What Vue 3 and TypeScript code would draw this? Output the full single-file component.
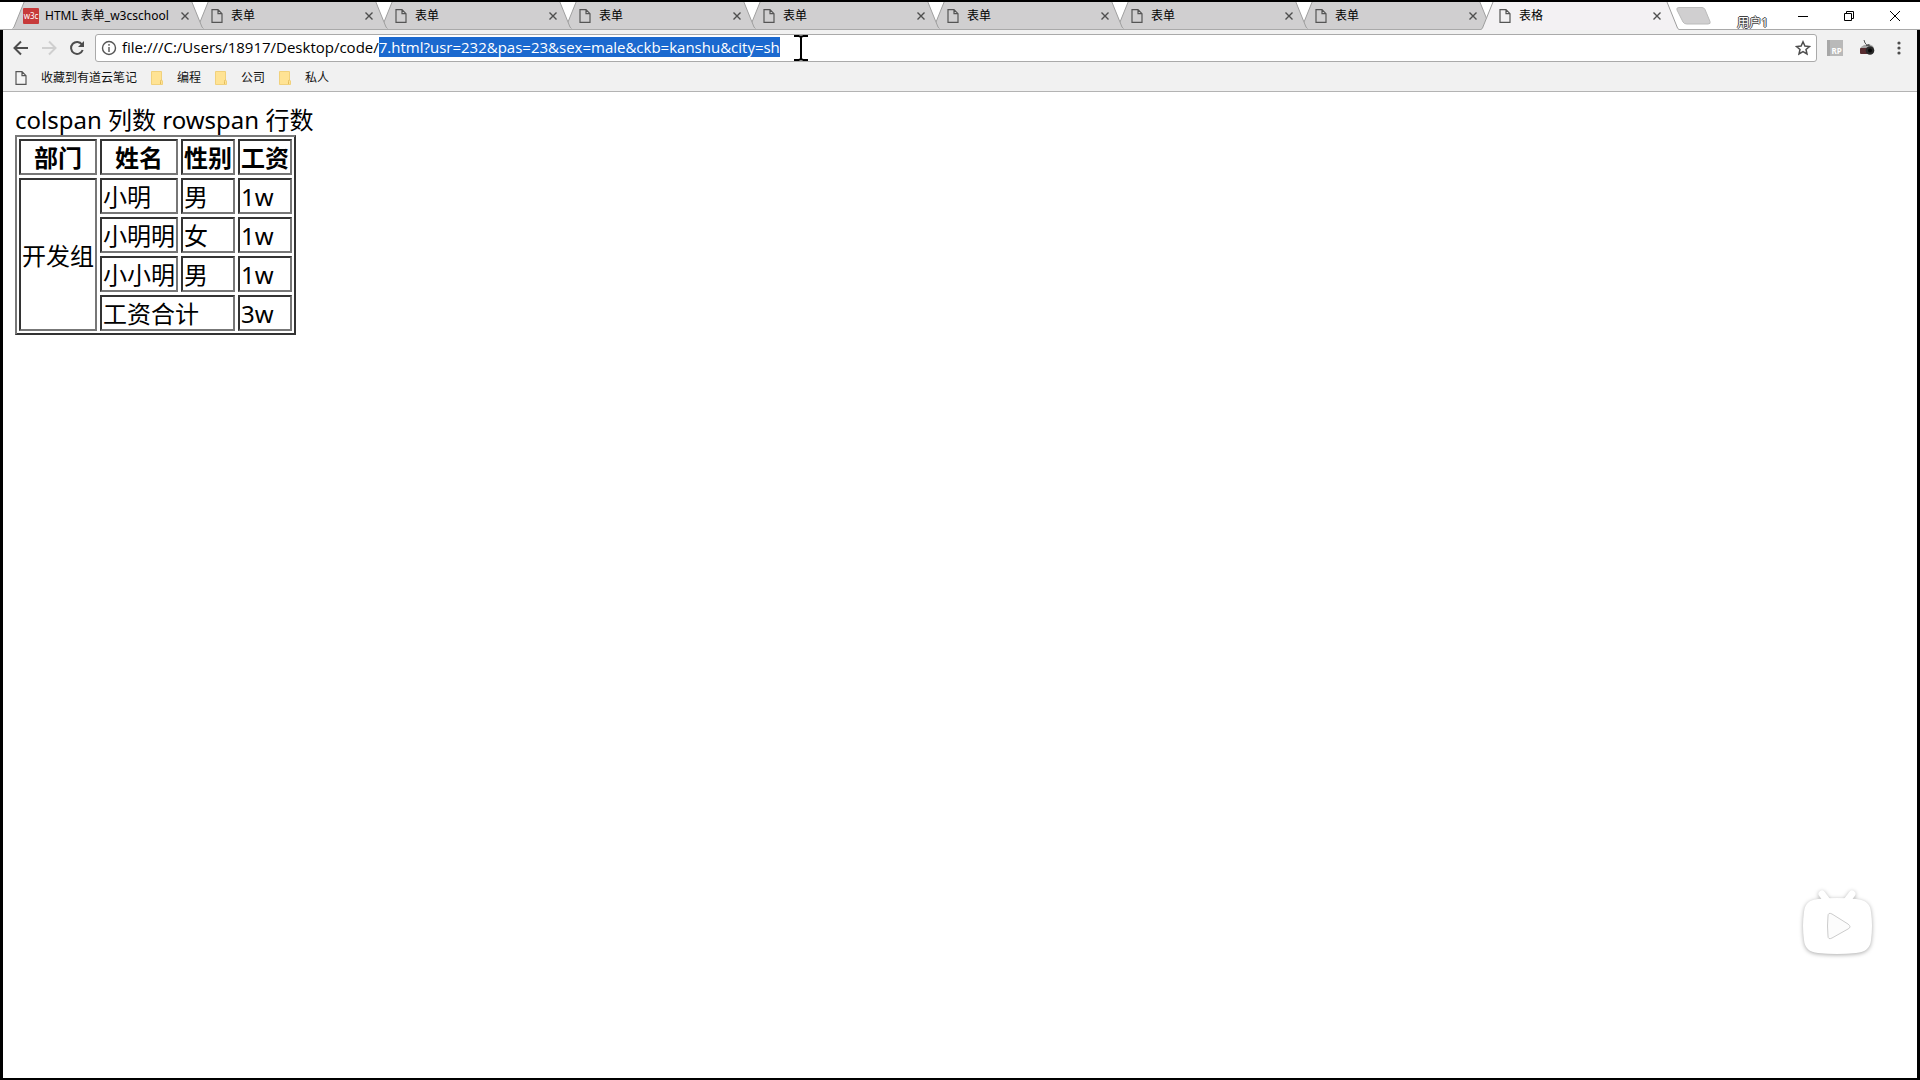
<script setup lang="ts">
import { ref } from 'vue'

interface Tab {
  title: string
  active?: boolean
  brand?: boolean
}

const tabs: Tab[] = [
  { title: 'HTML 表单_w3cschool', brand: true },
  ...Array.from({ length: 7 }, () => ({ title: '表单' })),
  { title: '表格', active: true },
]

const folders = ['编程', '公司', '私人']

const members = [
  { name: '小明', sex: '男', pay: '1w' },
  { name: '小明明', sex: '女', pay: '1w' },
  { name: '小小明', sex: '男', pay: '1w' },
]

const base = ref('file:///C:/Users/18917/Desktop/code/')
const selected = ref('7.html?usr=232&pas=23&sex=male&ckb=kanshu&city=sh')
</script>

<template>
  <div class="screen">
    <header class="strip">
      <nav class="tabs" aria-label="Tabs">
        <div
          v-for="(tab, i) in tabs"
          :key="i"
          class="tab"
          :class="{ active: tab.active }"
          :style="{ zIndex: tab.active ? 20 : 10 - i }"
        >
          <svg class="shape" viewBox="0 0 198 28" aria-hidden="true">
            <path class="fill" d="M0 28 L1 27 L12 0 H186 L197 27 L198 28Z" />
            <path class="edge" d="M0 27.5 L1.500 26 L12 0 M186 0 L196.500 26 L198 27.500" />
          </svg>
          <span v-if="tab.brand" class="brand">w3c</span>
          <svg v-else class="page" viewBox="0 0 12 14" aria-hidden="true">
            <path d="M1 .7H7L11 4.700V13.300H1ZM7 .7V4.700H11" />
          </svg>
          <button class="title">{{ tab.title }}</button>
          <button class="close" aria-label="Close tab">
            <svg viewBox="0 0 8 8"><path d="M.5 .5L7.500 7.500M7.500 .5L.5 7.500" /></svg>
          </button>
        </div>
        <button class="new-tab" aria-label="New tab">
          <svg viewBox="0 0 36 18">
            <path d="M3 .5H26Q28 .5 29 2.500L34 14.500Q35 17 32 17H11Q8 17 7 15L1 3Q0 .5 3 .5Z" />
          </svg>
        </button>
      </nav>
      <div class="window">
        <button class="user">用户1</button>
        <button class="win" aria-label="Minimize">
          <svg viewBox="0 0 12 12"><path d="M1 6.500H11" /></svg>
        </button>
        <button class="win" aria-label="Restore">
          <svg viewBox="0 0 12 12"><path d="M1.500 3.500H8.500V10.500H1.500ZM3.500 3.500V1.500H10.500V8.500H8.500" /></svg>
        </button>
        <button class="win" aria-label="Close window">
          <svg viewBox="0 0 12 12"><path d="M1 1L11 11M11 1L1 11" /></svg>
        </button>
      </div>
    </header>

    <div class="frame">
      <div class="toolbar">
        <div class="nav">
          <button aria-label="Back">
            <svg viewBox="0 0 16 16"><path d="M15 8H2M8 1.500L1.500 8L8 14.500" /></svg>
          </button>
          <button class="off" aria-label="Forward">
            <svg viewBox="0 0 16 16"><path d="M1 8H14M8 1.500L14.500 8L8 14.500" /></svg>
          </button>
          <button aria-label="Reload">
            <svg viewBox="0 0 16 16">
              <path d="M13 4.500A6 6 0 1 0 13.700 10" />
              <path class="solid" d="M15 1V7H9Z" />
            </svg>
          </button>
        </div>
        <div class="omnibox">
          <svg class="info" viewBox="0 0 16 16" aria-hidden="true">
            <circle cx="8" cy="8" r="6.500" />
            <path d="M8 7V12M8 4V5.800" />
          </svg>
          <div class="url" role="textbox" aria-label="Address" contenteditable="true" spellcheck="false"><span>{{ base }}</span><mark>{{ selected }}</mark></div>
          <svg class="caret" viewBox="0 0 14 26" aria-hidden="true">
            <path d="M0 1H5M9 1H14M5 1L7 2L9 1M7 2V24M0 25H5M9 25H14M5 25L7 24L9 25" />
          </svg>
          <button class="star" aria-label="Bookmark">
            <svg viewBox="0 0 16 16">
              <path d="M8 1.800L9.900 6L14.500 6.500L11 9.500L12 14L8 11.700L4 14L5 9.500L1.500 6.500L6.100 6Z" />
            </svg>
          </button>
        </div>
        <div class="extensions">
          <button class="rp" aria-label="RP">
            <span>RP</span>
          </button>
          <button aria-label="Camera">
            <svg class="camera" viewBox="0 0 16 16">
              <path d="M5 0L6 3L8 5" stroke="#555" fill="none" />
              <path d="M2 7L5 5L10 4L14 6L15 9H1Z" fill="#a6a6a6" />
              <rect x="1" y="8" width="8" height="6" rx="1" fill="#582d30" />
              <circle cx="11" cy="10.500" r="4.300" fill="#292929" />
              <circle cx="11" cy="10.500" r="2" fill="#080808" />
              <path d="M7 5L10 4L11 6H7Z" fill="#555" />
            </svg>
          </button>
          <button aria-label="Menu">
            <svg class="dots" viewBox="0 0 16 16">
              <circle cx="8" cy="3" r="1.600" /><circle cx="8" cy="8" r="1.600" /><circle cx="8" cy="13" r="1.600" />
            </svg>
          </button>
        </div>
      </div>

      <nav class="bookmarks" aria-label="Bookmarks">
        <a href="#">
          <svg class="page" viewBox="0 0 12 14" aria-hidden="true">
            <path d="M1 .7H7L11 4.700V13.300H1ZM7 .7V4.700H11" />
          </svg>
          收藏到有道云笔记
        </a>
        <a v-for="name in folders" :key="name" href="#">
          <svg class="folder" viewBox="0 0 12 14" aria-hidden="true">
            <path d="M.5 .5H10.500V9L11.500 10V13.500H.5Z" fill="#ffe394" stroke="#f1d17c" />
            <path d="M9.500 13V10.500Q9.500 9 10.500 9" fill="none" stroke="#e4bd5c" />
          </svg>
          {{ name }}
        </a>
      </nav>

      <main class="content">
        <p>colspan 列数 rowspan 行数</p>
        <table>
          <thead>
            <tr><th>部门</th><th>姓名</th><th>性别</th><th>工资</th></tr>
          </thead>
          <tbody>
            <tr v-for="(m, i) in members" :key="m.name">
              <td v-if="i === 0" :rowspan="members.length + 1">开发组</td>
              <td>{{ m.name }}</td>
              <td>{{ m.sex }}</td>
              <td>{{ m.pay }}</td>
            </tr>
            <tr><td colspan="2">工资合计</td><td>3w</td></tr>
          </tbody>
        </table>
      </main>
    </div>

    <button class="player" aria-label="Play">
      <svg viewBox="0 0 80 76">
        <g class="body">
          <path d="M24 8L30 16M54 8L48 16" stroke="#fff" stroke-width="7" stroke-linecap="round" />
          <path d="M20 13Q39 11 58 13Q72 14 73 26Q75 40 73 54Q72 66 58 67Q39 69 20 67Q7 66 6 54Q4 40 6 26Q7 14 20 13Z" fill="#fff" />
        </g>
        <path class="triangle" d="M30 30Q30 26 34 28L50 38Q54 41 50 43L34 52Q30 54 30 50Q29 40 30 30Z" />
      </svg>
    </button>
  </div>
</template>

<style>
body {
  margin: 0;
  background: #000;
}
</style>

<style scoped>
.screen {
  position: relative;
  display: flex;
  flex-direction: column;
  box-sizing: border-box;
  min-height: 100vh;
  padding: 2px 0;
  background: #000;
  color: #000;
  font-family: "Noto Sans", "Noto Sans CJK SC", sans-serif;
}
button {
  margin: 0;
  padding: 0;
  border: 0;
  background: none;
  color: inherit;
  font: inherit;
}
svg {
  display: block;
  flex: none;
}
.strip {
  display: flex;
  justify-content: space-between;
  height: 28px;
  box-sizing: border-box;
  background: #fff;
  box-shadow: inset 0 -1px #a9a9a9;
}
.tabs {
  display: flex;
  padding-left: 9px;
}
.tab {
  position: relative;
  display: flex;
  align-items: center;
  box-sizing: border-box;
  width: 198px;
  height: 28px;
  margin-right: -14px;
  padding: 0 18px 0 14px;
  font-size: 12px;
}
.shape {
  position: absolute;
  inset: 0;
  width: 198px;
  height: 28px;
}
.fill {
  fill: #d0cfd0;
}
.edge {
  fill: none;
  stroke: #9d9d9d;
}
.tab:not(.active) {
  box-shadow: inset 0 -1px #a9a9a9;
}
.tab:not(.active) .shape {
  height: 27px;
}
.active .fill {
  fill: #f3f1f3;
}
.brand {
  position: relative;
  width: 16px;
  height: 16px;
  overflow: hidden;
  border-radius: 1px;
  background: #c73a3a;
  color: #fff;
  font-size: 8px;
  line-height: 15px;
  text-align: center;
}
.page {
  position: relative;
  width: 12px;
  height: 14px;
  fill: #f4f4f4;
  stroke: #555;
  stroke-width: 1.2;
}
.tab .page {
  margin: 0 2px 0 4px;
  fill: none;
}
.title {
  position: relative;
  flex: 1;
  min-width: 0;
  margin-left: 6px;
  overflow: hidden;
  line-height: 20px;
  text-align: left;
  white-space: nowrap;
}
.close {
  position: relative;
}
.close svg {
  width: 8px;
  height: 8px;
  fill: none;
  stroke: #4e4e4e;
  stroke-width: 1.4;
}
.new-tab {
  margin-left: 11px;
}
.new-tab svg {
  width: 36px;
  height: 18px;
  fill: #d0cfd0;
  stroke: #bbb;
}
.window {
  display: flex;
  align-items: center;
  padding-right: 2px;
}
.user {
  align-self: flex-end;
  margin-right: 12px;
  color: #fff;
  font-size: 12px;
  line-height: 14px;
  text-shadow: 1px 0 #444, -1px 0 #444, 0 1px #444, 0 -1px #444;
}
.win {
  display: grid;
  place-items: center;
  width: 46px;
  height: 28px;
}
.win svg {
  width: 12px;
  height: 12px;
  fill: none;
  stroke: #000;
}
.frame {
  display: flex;
  flex: 1;
  flex-direction: column;
  margin: 0 3px;
  background: #fff;
}
.toolbar {
  display: flex;
  align-items: center;
  height: 36px;
  background: #f1f1f1;
}
.nav {
  display: flex;
  gap: 12px;
  padding: 0 10px;
}
.nav svg {
  width: 16px;
  height: 16px;
  fill: none;
  stroke: #4d4d4d;
  stroke-width: 2;
}
.nav .off svg {
  stroke: #cfcfcf;
}
.nav .solid {
  fill: #4d4d4d;
  stroke: none;
}
.omnibox {
  display: flex;
  flex: 1;
  align-items: center;
  box-sizing: border-box;
  height: 28px;
  border: 1px solid #aaa;
  border-radius: 3px;
  background: #fff;
}
.info {
  width: 16px;
  height: 16px;
  margin: 0 5px;
  fill: none;
  stroke: #555;
  stroke-width: 1.4;
}
.url {
  padding-bottom: 2px;
  font-family: "Open Sans", "Noto Sans CJK SC", sans-serif;
  font-size: 15px;
  line-height: 18px;
  white-space: nowrap;
  outline: 0;
}
.url mark {
  background: #1b69cf;
  color: #fff;
}
.caret {
  width: 14px;
  height: 26px;
  margin-left: 14px;
  fill: none;
  stroke: #000;
  stroke-width: 2;
}
.star {
  margin: 0 5px 0 auto;
}
.star svg {
  width: 16px;
  height: 16px;
  fill: none;
  stroke: #4d4d4d;
  stroke-width: 1.5;
}
.extensions {
  display: flex;
  align-items: center;
  gap: 16px;
  padding: 0 10px;
}
.extensions svg {
  width: 16px;
  height: 16px;
}
.dots {
  fill: #4d4d4d;
}
.rp {
  width: 16px;
  height: 16px;
  border-left: 3px solid #a7a7a7;
  background: #b9b9b9;
  color: #fff;
  font-size: 8px;
  font-weight: 700;
  line-height: 8px;
}
.rp span {
  display: block;
  padding-top: 6px;
}
.bookmarks {
  display: flex;
  align-items: center;
  gap: 14px;
  box-sizing: border-box;
  height: 26px;
  padding: 0 12px 2px;
  border-bottom: 1px solid #b3b3b3;
  background: #f1f1f1;
  font-size: 12px;
  line-height: 20px;
}
.bookmarks a {
  display: flex;
  align-items: center;
  gap: 14px;
  color: #111;
  text-decoration: none;
}
.folder {
  width: 12px;
  height: 14px;
}
.content {
  padding: 12px;
  font-size: 24px;
  line-height: 31px;
}
.content p {
  margin: 0;
}
table {
  border: 1px solid;
  border-color: #777 #333 #333 #777;
  border-spacing: 3px;
  box-shadow: inset 1px 1px #777, inset -1px -1px #333;
}
th,
td {
  padding: 1px 1px 0;
  border: 2px solid;
  border-color: #333 #777 #777 #333;
}
.player {
  position: absolute;
  right: 42px;
  bottom: 118px;
}
.player svg {
  width: 80px;
  height: 76px;
  overflow: visible;
}
.body {
  filter: drop-shadow(0 1px 2px #aaa);
}
.triangle {
  fill: #fcfcfc;
  stroke: #ccc;
}
</style>
